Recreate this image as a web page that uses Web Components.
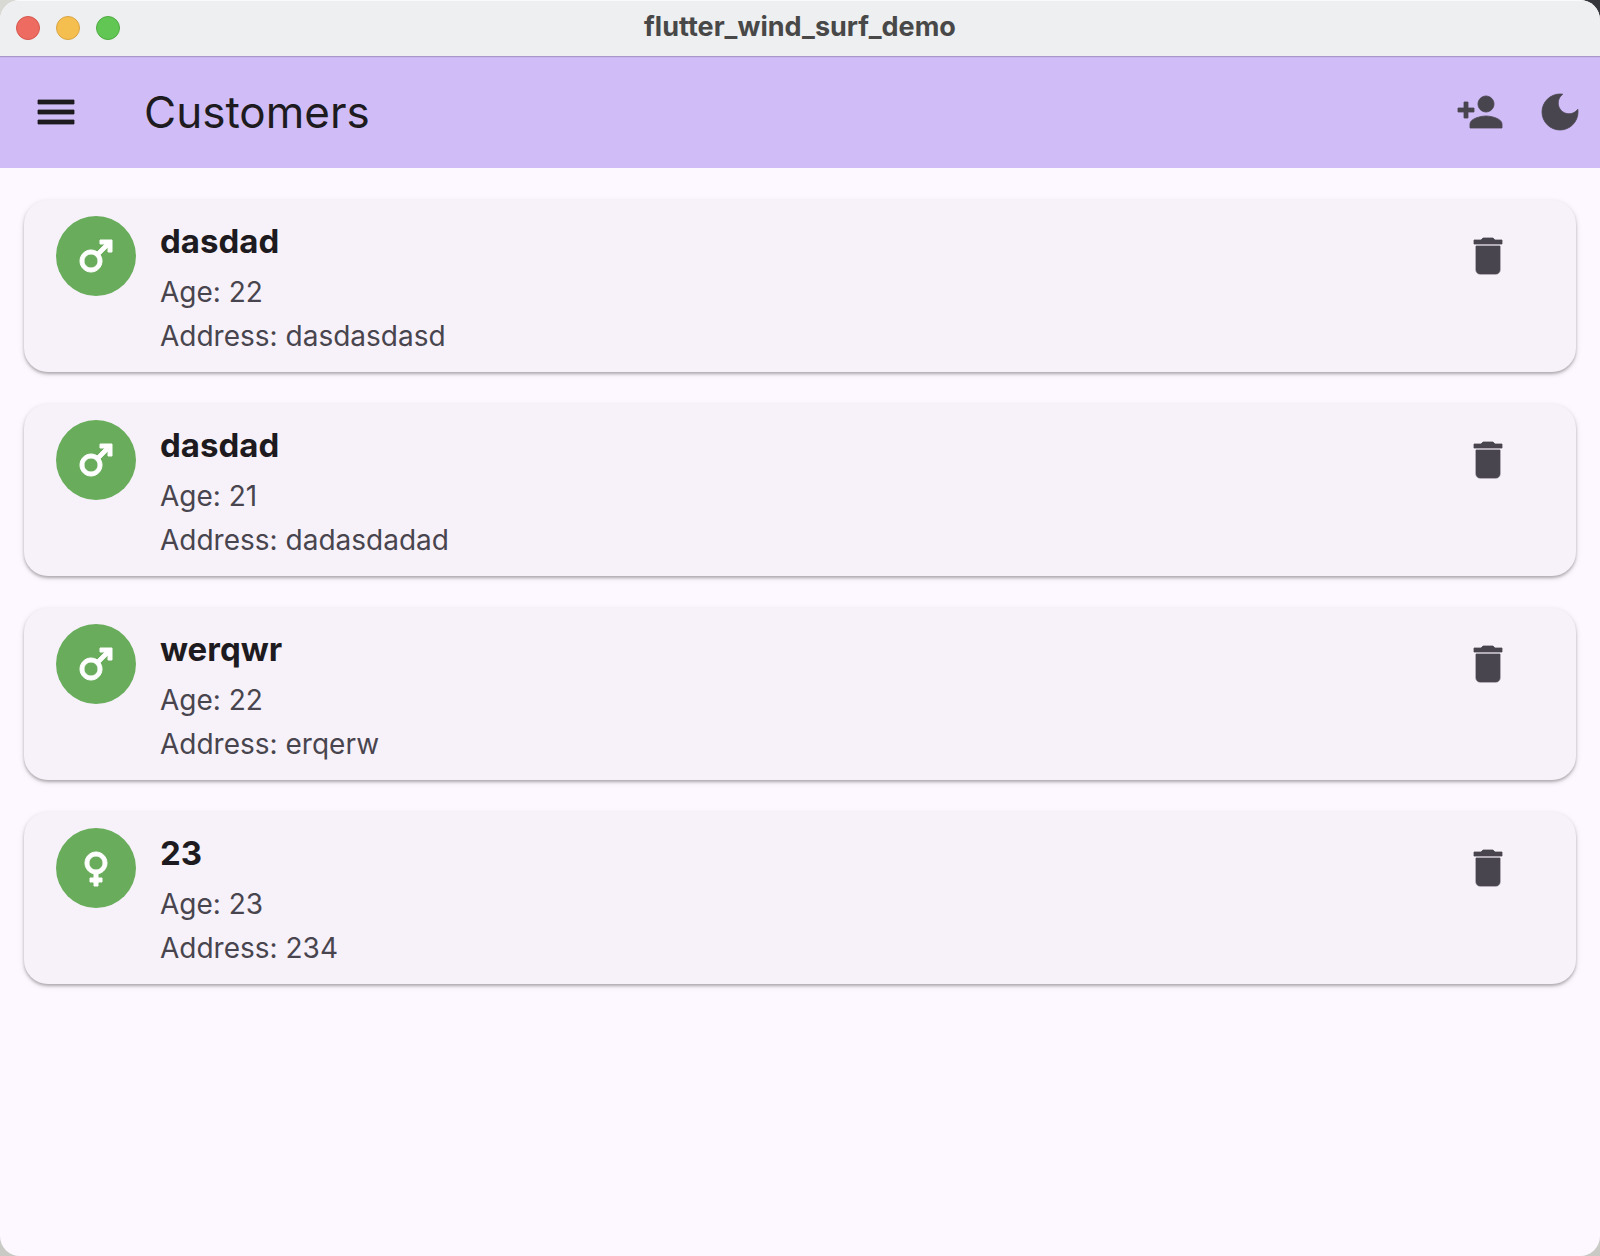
<!DOCTYPE html>
<html lang="en">
<head>
<meta charset="utf-8">
<title>flutter_wind_surf_demo</title>
<style>
html,body{margin:0;height:100%}
body{background:linear-gradient(90deg,#d9d9d4 0 50%,#35363b 50%) top/100% 50% no-repeat,#c9cac6;font-family:Inter,"Liberation Sans",sans-serif;color:#1d1b20}
</style>
</head>
<body>
<app-window heading="flutter_wind_surf_demo">
  <app-bar heading="Customers"></app-bar>
  <customer-list>
    <customer-card name="dasdad" age="22" address="dasdasdasd" gender="male"></customer-card>
    <customer-card name="dasdad" age="21" address="dadasdadad" gender="male"></customer-card>
    <customer-card name="werqwr" age="22" address="erqerw" gender="male"></customer-card>
    <customer-card name="23" age="23" address="234" gender="female"></customer-card>
  </customer-list>
</app-window>
<script>
const ICONS = {
  menu: '<path d="M3 18h18v-2H3v2zm0-5h18v-2H3v2zm0-7v2h18V6H3z"/>',
  personAdd: '<path d="M15 12c2.21 0 4-1.79 4-4s-1.79-4-4-4-4 1.79-4 4 1.79 4 4 4zm-9-2V7H4v3H1v2h3v3h2v-3h3v-2H6zm9 4c-2.67 0-8 1.34-8 4v2h16v-2c0-2.66-5.33-4-8-4z"/>',
  moon: '<path d="M12 3c-4.97 0-9 4.03-9 9s4.03 9 9 9 9-4.03 9-9c0-.46-.04-.92-.1-1.36-.98 1.37-2.58 2.26-4.4 2.26-2.98 0-5.4-2.42-5.4-5.4 0-1.81.89-3.42 2.26-4.4-.44-.06-.9-.1-1.36-.1z"/>',
  trash: '<path d="M6 19c0 1.1.9 2 2 2h8c1.1 0 2-.9 2-2V7H6v12zM19 4h-3.5l-1-1h-5l-1 1H5v2h14V4z"/>',
  male: '<path d="M9.5 11c1.93 0 3.5 1.57 3.5 3.5S11.43 18 9.5 18 6 16.43 6 14.5 7.57 11 9.5 11zm0-2C6.46 9 4 11.46 4 14.5S6.46 20 9.5 20s5.5-2.46 5.5-5.5c0-1.16-.36-2.23-.97-3.12L18 7.42V10h2V4h-6v2h2.58l-3.97 3.97C11.73 9.36 10.66 9 9.5 9z"/>',
  female: '<path d="M17.5 9.5C17.5 6.46 15.04 4 12 4S6.5 6.46 6.5 9.5c0 2.7 1.94 4.93 4.5 5.4V17H9v2h2v2h2v-2h2v-2h-2v-2.1c2.56-.47 4.5-2.7 4.5-5.4zm-9 0C8.5 7.57 10.07 6 12 6s3.5 1.57 3.5 3.5S13.93 13 12 13s-3.5-1.57-3.5-3.5z"/>'
};
const make = (host, html) => {
  const t = document.createElement('template');
  t.innerHTML = html;
  host.attachShadow({mode: 'open'}).append(t.content.cloneNode(true));
};

customElements.define('md-icon', class extends HTMLElement {
  connectedCallback() {
    if (this.shadowRoot) return;
    make(this, `<style>:host{display:block;width:48px;height:48px}svg{display:block;width:100%;height:100%;fill:currentColor;stroke:currentColor;stroke-width:var(--icon-weight,.4)}</style>
    <svg viewBox="0 0 24 24" aria-hidden="true">${ICONS[this.getAttribute('name')]}</svg>`);
  }
});

customElements.define('icon-button', class extends HTMLElement {
  connectedCallback() {
    if (this.shadowRoot) return;
    make(this, `<style>:host{display:block}button{display:grid;place-items:center;width:80px;height:80px;padding:0;border:0;border-radius:50%;background:none;color:inherit;cursor:pointer}</style>
    <button type="button" aria-label="${this.getAttribute('label')}"><md-icon name="${this.getAttribute('icon')}"></md-icon></button>`);
  }
});

customElements.define('app-window', class extends HTMLElement {
  connectedCallback() {
    make(this, `<style>
      :host{display:flex;flex-direction:column;min-height:100%;border-radius:20px;overflow:hidden;background:#fdf8ff}
      header{display:grid;grid-template-columns:1fr auto 1fr;align-items:center;height:56px;padding:0 16px;box-sizing:border-box;background:#edeff0;box-shadow:inset 0 1px #f9fafa}
      .lights{display:flex;gap:16px}
      .lights button{width:24px;height:24px;padding:0;border:1px solid var(--edge);border-radius:50%;background:var(--fill)}
      .close{--fill:#ed6b60;--edge:#d6574e}
      .min{--fill:#f5bf4f;--edge:#d9a343}
      .max{--fill:#62c655;--edge:#4eac40}
      h1{margin:0;padding-bottom:2px;font-size:27px;line-height:32px;font-weight:700;color:#484848}
    </style>
    <header>
      <div class="lights"><button class="close" aria-label="Close"></button><button class="min" aria-label="Minimize"></button><button class="max" aria-label="Zoom"></button></div>
      <h1>${this.getAttribute('heading')}</h1>
    </header>
    <slot></slot>`);
  }
});

customElements.define('app-bar', class extends HTMLElement {
  connectedCallback() {
    make(this, `<style>
      :host{display:flex;align-items:center;height:112px;padding-left:16px;background:#d0bdf7;box-shadow:inset 0 1px #a898ca,inset 0 2px #c8b5ee}
      h2{flex:1;margin:0;padding-left:48px;font-size:44px;line-height:56px;font-weight:400}
      .actions{display:flex;color:#49454e}
    </style>
    <icon-button icon="menu" label="Open navigation menu"></icon-button>
    <h2>${this.getAttribute('heading')}</h2>
    <div class="actions"><icon-button icon="personAdd" label="Add customer"></icon-button><icon-button icon="moon" label="Dark mode"></icon-button></div>`);
  }
});

customElements.define('customer-list', class extends HTMLElement {
  connectedCallback() {
    make(this, `<style>:host{display:flex;flex-direction:column;gap:32px;padding:32px 24px}</style><slot></slot>`);
  }
});

customElements.define('customer-card', class extends HTMLElement {
  connectedCallback() {
    const a = n => this.getAttribute(n);
    make(this, `<style>
      :host{display:flex;align-items:flex-start;gap:24px;padding:16px 48px 16px 32px;border-radius:24px;background:#f7f2fa;box-shadow:0 2px 3px rgba(0,0,0,.26),0 2px 6px rgba(0,0,0,.1)}
      .avatar{display:grid;place-items:center;width:80px;height:80px;border-radius:50%;background:#69ad5c;color:#fff;--icon-weight:.5}
      .info{flex:1;display:flex;flex-direction:column;gap:4px;font-size:28px;line-height:40px;color:#49454e}
      h3{margin:0 0 2px;font-size:33px;line-height:50px;font-weight:700;color:#1d1b20}
      p{margin:0}
      icon-button{color:#49454e}
    </style>
    <div class="avatar"><md-icon name="${a('gender')}"></md-icon></div>
    <div class="info"><h3>${a('name')}</h3><p>Age: ${a('age')}</p><p>Address: ${a('address')}</p></div>
    <icon-button icon="trash" label="Delete ${a('name')}"></icon-button>`);
  }
});
</script>
</body>
</html>
